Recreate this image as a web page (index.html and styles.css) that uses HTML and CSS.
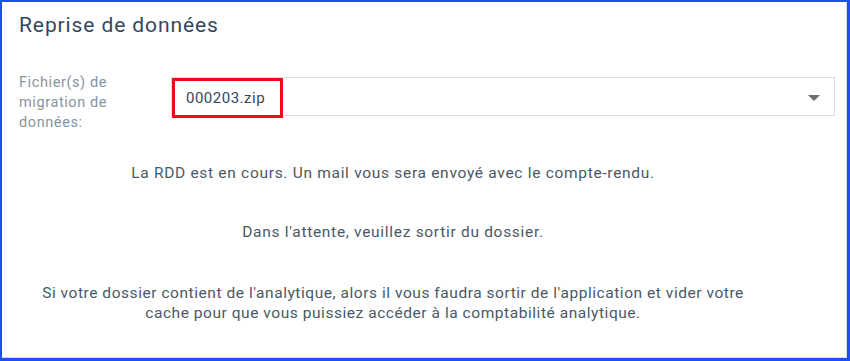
FILE: index.html
```html
<!DOCTYPE html>
<html lang="fr">
<head>
    <meta charset="UTF-8">
    <title>Reprise de données</title>
    <link rel="stylesheet" href="styles.css">
</head>
<body>

    <div class="cadre">
        <h1>Reprise de données</h1>

        <!-- Choix du fichier -->
        <div class="ligne">
            <label class="libelle">Fichier(s) de migration de données:</label>
            <div class="liste">
                <span class="valeur">000203.zip</span>
                <span class="fleche"></span>
            </div>
        </div>

        <!-- Messages -->
        <div class="messages">
            <p class="msg-1">La RDD est en cours. Un mail vous sera envoyé avec le compte-rendu.</p>
            <p class="msg-2">Dans l'attente, veuillez sortir du dossier.</p>
            <p class="msg-3">Si votre dossier contient de l'analytique, alors il vous faudra sortir de l'application et vider votre<br>cache pour que vous puissiez accéder à la comptabilité analytique.</p>
        </div>
    </div>

</body>
</html>
```

FILE: styles.css
```css
/* Style général */
body {
    margin: 0;
    font-family: Roboto, "Liberation Sans", sans-serif;
    background: white;
}
.cadre {
    box-sizing: border-box;
    width: 850px;
    height: 361px;
    border: 2px solid #1f4ff2;
    border-right-width: 3px;
    border-bottom-width: 3px;
    box-shadow: inset -1px -1px 0 #d4dae6;
    padding: 0 12px 0 17px;
}
h1 {
    margin: 0;
    padding-top: 8px;
    font-size: 21px;
    line-height: 30px;
    font-weight: 400;
    letter-spacing: 0.9px;
    color: #34485c;
}
.ligne {
    display: flex;
    align-items: flex-start;
    margin-top: 37px;
}
.libelle {
    width: 140px;
    margin-right: 12px;
    margin-top: -4px;
    font-size: 14.5px;
    line-height: 20px;
    letter-spacing: 0.6px;
    color: #8794a2;
}
.liste {
    flex: 1;
    position: relative;
    display: flex;
    height: 39px;
    box-sizing: border-box;
    border: 1px solid #dcdcdc;
}
.valeur {
    display: flex;
    align-items: center;
    padding: 0 15px 0 11px;
    border: 3px solid #e3101c;
    font-size: 15px;
    letter-spacing: 0.5px;
    color: #34485c;
    height: 34px;
}
.fleche {
    position: absolute;
    right: 14px;
    top: 17px;
    border-left: 6px solid transparent;
    border-right: 6px solid transparent;
    border-top: 6px solid #6e6e6e;
}
/* Messages centrés */
.messages {
    width: 748px;
    text-align: center;
    font-size: 15.5px;
    letter-spacing: 0.7px;
    color: #4a5866;
}
.messages p {
    margin: 0;
    line-height: 20px;
}
.msg-1 {
    margin-top: 30px !important;
}
.msg-2 {
    margin-top: 39px !important;
}
.msg-3 {
    margin-top: 41px !important;
    letter-spacing: 0.55px;
}
```
